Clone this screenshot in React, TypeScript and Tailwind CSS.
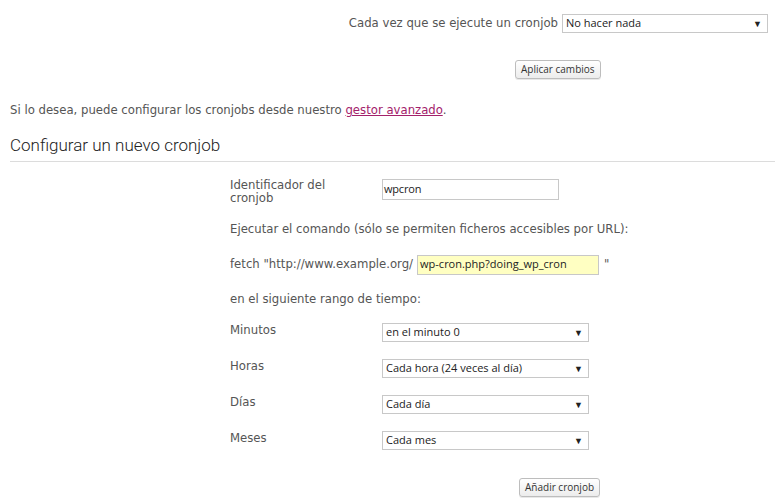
import React from "react";

const Sel = ({ text, w }: { text: string; w: string }) => (
  <div className={`${w} h-[19px] border border-[#c8c8c8] bg-white flex items-center justify-between pl-[3px] pr-[5px] text-[11px] text-[#222] font-['Open_Sans',sans-serif]`}>
    <span>{text}</span>
    <span className="text-[9px] text-[#222] leading-none">▼</span>
  </div>
);

const Btn = ({ text }: { text: string }) => (
  <div className="inline-flex items-center h-[19px] px-[5px] rounded-[3px] border border-[#bdbdbd] bg-gradient-to-b from-white to-[#ececec] text-[10px] text-[#333] font-['Open_Sans',sans-serif] shadow-[0_1px_0_#e8e8e8]">
    {text}
  </div>
);

export default function App() {
  const label = "text-[11.7px] text-[#555] font-['DejaVu_Sans',sans-serif]";
  return (
    <div className="w-[775px] h-[500px] bg-white overflow-hidden font-['DejaVu_Sans',sans-serif]">
      <div className="flex justify-end items-center pt-[14px] pr-[7px] gap-[4px]">
        <span className={label}>Cada vez que se ejecute un cronjob</span>
        <Sel text="No hacer nada" w="w-[206px]" />
      </div>
      <div className="pl-[515px] mt-[23px]">
        <Btn text="Aplicar cambios" />
      </div>
      <p className={`${label} pl-[10px] mt-[22px]`}>
        Si lo desea, puede configurar los cronjobs desde nuestro{" "}
        <span className="text-[#a3216b] underline">gestor avanzado</span>.
      </p>
      <div className="ml-[10px] mt-[14px] border-b border-[#dcdcdc] pb-[5px]">
        <h2 className="text-[17px] font-light text-[#222] font-['Roboto',sans-serif] leading-[22px]">
          Configurar un nuevo cronjob
        </h2>
      </div>
      <div className="ml-[230px] mt-[17px] flex flex-col">
        <div className="flex items-start">
          <div className={`${label} w-[152px] leading-[13px] pt-[0px]`}>
            Identificador del
            <br />
            cronjob
          </div>
          <div className="w-[177px] h-[21px] border border-[#c8c8c8] bg-white flex items-center pl-[1px] text-[11px] text-[#222] font-['Open_Sans',sans-serif] tracking-[-0.2px]">
            wpcron
          </div>
        </div>
        <div className={`${label} mt-[16px] leading-[17px]`}>
          Ejecutar el comando (sólo se permiten ficheros accesibles por URL):
        </div>
        <div className="flex items-center mt-[17px]">
          <span className={label}>fetch "http://www.example.org/</span>
          <div className="ml-[4px] w-[182px] h-[20px] border border-[#c8c8c8] bg-[#ffffc2] flex items-center pl-[2px] text-[11px] text-[#222] font-['Open_Sans',sans-serif]">
            wp-cron.php?doing_wp_cron
          </div>
          <span className={`${label} ml-[5px]`}>"</span>
        </div>
        <div className={`${label} mt-[16px] leading-[17px]`}>en el siguiente rango de tiempo:</div>
        {[
          ["Minutos", "en el minuto 0"],
          ["Horas", "Cada hora (24 veces al día)"],
          ["Días", "Cada día"],
          ["Meses", "Cada mes"],
        ].map(([l, v], i) => (
          <div key={l} className={`flex items-start ${i === 0 ? "mt-[15px]" : "mt-[17px]"}`}>
            <div className={`${label} w-[152px] leading-[14px]`}>{l}</div>
            <Sel text={v} w="w-[207px]" />
          </div>
        ))}
        <div className="pl-[289px] mt-[24px]">
          <Btn text="Añadir cronjob" />
        </div>
      </div>
    </div>
  );
}
